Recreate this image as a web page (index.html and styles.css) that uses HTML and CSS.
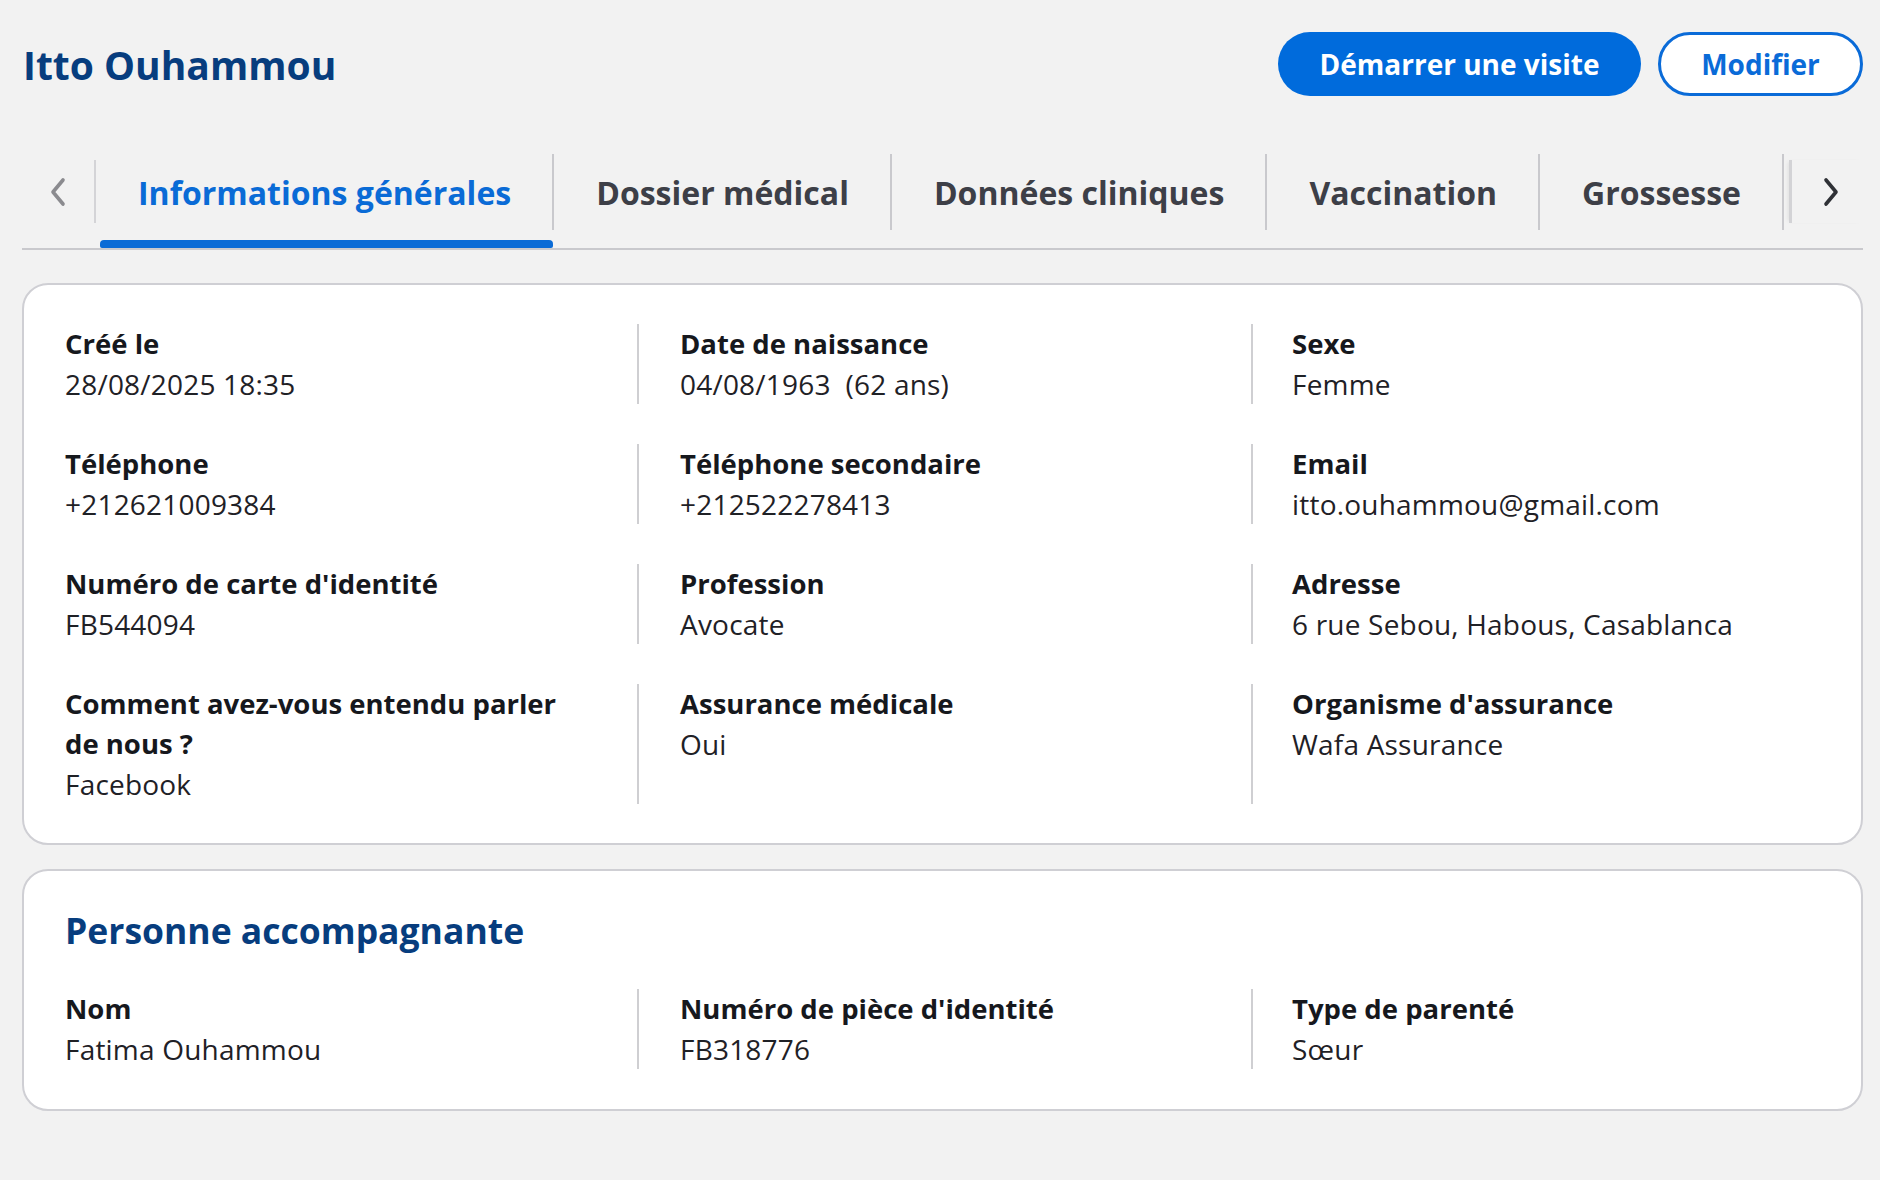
FILE: index.html
```html
<!DOCTYPE html>
<html lang="fr">
<head>
<meta charset="utf-8">
<title>Itto Ouhammou</title>
<link rel="stylesheet" href="styles.css">
</head>
<body>
<div class="page">
  <header class="header">
    <h1 class="name">Itto Ouhammou</h1>
    <div class="actions">
      <button class="btn btn-primary">Démarrer une visite</button>
      <button class="btn btn-outline">Modifier</button>
    </div>
  </header>

  <nav class="tabs">
    <button class="chev chev-left" aria-label="Précédent">
      <svg width="20" height="30" viewBox="0 0 20 30"><polyline points="15,3 5,15 15,27" fill="none" stroke="#8b8b8f" stroke-width="3.6" stroke-linecap="round" stroke-linejoin="round"/></svg>
    </button>
    <div class="tab-list">
      <div class="tab active"><span class="tab-label">Informations générales</span><span class="tab-bar"></span></div>
      <div class="tab"><span class="tab-label">Dossier médical</span><span class="tab-bar"></span></div>
      <div class="tab"><span class="tab-label">Données cliniques</span><span class="tab-bar"></span></div>
      <div class="tab"><span class="tab-label">Vaccination</span><span class="tab-bar"></span></div>
      <div class="tab"><span class="tab-label">Grossesse</span><span class="tab-bar"></span></div>
    </div>
    <button class="chev chev-right" aria-label="Suivant">
      <svg width="20" height="30" viewBox="0 0 20 30"><polyline points="5,3 15,15 5,27" fill="none" stroke="#2f3136" stroke-width="3.6" stroke-linecap="round" stroke-linejoin="round"/></svg>
    </button>
  </nav>

  <section class="card">
    <div class="grid">
      <div class="field"><div class="label">Créé le</div><div class="value">28/08/2025 18:35</div></div>
      <div class="field"><div class="label">Date de naissance</div><div class="value">04/08/1963&nbsp; (62 ans)</div></div>
      <div class="field"><div class="label">Sexe</div><div class="value">Femme</div></div>

      <div class="field"><div class="label">Téléphone</div><div class="value">+212621009384</div></div>
      <div class="field"><div class="label">Téléphone secondaire</div><div class="value">+212522278413</div></div>
      <div class="field"><div class="label">Email</div><div class="value">itto.ouhammou@gmail.com</div></div>

      <div class="field"><div class="label">Numéro de carte d'identité</div><div class="value">FB544094</div></div>
      <div class="field"><div class="label">Profession</div><div class="value">Avocate</div></div>
      <div class="field"><div class="label">Adresse</div><div class="value">6 rue Sebou, Habous, Casablanca</div></div>

      <div class="field"><div class="label">Comment avez-vous entendu parler de nous ?</div><div class="value">Facebook</div></div>
      <div class="field"><div class="label">Assurance médicale</div><div class="value">Oui</div></div>
      <div class="field"><div class="label">Organisme d'assurance</div><div class="value">Wafa Assurance</div></div>
    </div>
  </section>

  <section class="card card-companion">
    <h2 class="card-title">Personne accompagnante</h2>
    <div class="grid">
      <div class="field"><div class="label">Nom</div><div class="value">Fatima Ouhammou</div></div>
      <div class="field"><div class="label">Numéro de pièce d'identité</div><div class="value">FB318776</div></div>
      <div class="field"><div class="label">Type de parenté</div><div class="value">Sœur</div></div>
    </div>
  </section>
</div>
</body>
</html>
```

FILE: styles.css
```css
* { box-sizing: border-box; }

html, body {
  margin: 0;
  background: #f2f2f2;
}

body {
  font-family: "Open Sans", "Noto Sans", sans-serif;
  color: #16181d;
}

.page {
  padding: 32px 17px 40px 22px;
}

/* Header */
.header {
  display: flex;
  align-items: center;
  justify-content: space-between;
  height: 64px;
}

.name {
  margin: 0;
  padding-left: 1px;
  font-size: 39px;
  font-weight: 700;
  color: #073d7e;
  line-height: 1;
}

.actions {
  display: flex;
  gap: 17px;
}

.btn {
  font-family: inherit;
  height: 64px;
  border-radius: 32px;
  font-size: 28px;
  font-weight: 700;
  cursor: pointer;
  display: flex;
  align-items: center;
  justify-content: center;
}

.btn-primary {
  width: 363px;
  background: #006bdc;
  border: none;
  color: #fff;
}

.btn-outline {
  width: 205px;
  background: #fff;
  border: 3px solid #0a6bd8;
  color: #0a6bd8;
}

/* Tabs */
.tabs {
  display: flex;
  align-items: flex-start;
  margin-top: 58px;
  border-bottom: 2px solid #c9c9cd;
}

.chev {
  flex: 0 0 auto;
  width: 74px;
  height: 63px;
  margin-top: 6px;
  background: transparent;
  border: none;
  padding: 0;
  display: flex;
  align-items: center;
  justify-content: center;
}

.chev-left {
  border-right: 2px solid #d4d4d7;
}

.chev-right {
  border-left: 3px solid #d3d3d6;
  box-shadow: -3px 0 4px -2px rgba(0, 0, 0, 0.08);
  padding-left: 6px;
}

.tab-list {
  flex: 1 1 auto;
  display: flex;
  overflow: hidden;
  min-width: 0;
}

.tab {
  flex: 0 0 auto;
  display: flex;
  flex-direction: column;
}

.tab-label {
  height: 76px;
  padding: 0 41px 0 42px;
  border-right: 2px solid #c9c9cd;
  display: flex;
  align-items: center;
  font-size: 32px;
  font-weight: 700;
  color: #3d3f47;
  white-space: nowrap;
}

.tab-bar {
  height: 8px;
  margin: 10px 1px 0 4px;
  border-radius: 4px 4px 2px 2px;
}

.tab.active .tab-label {
  color: #0a6bd6;
}

.tab.active .tab-bar {
  background: #0a6bd6;
}

/* Cards */
.card {
  margin-top: 33px;
  background: #fff;
  border: 2px solid #cfcfd4;
  border-radius: 26px;
  padding: 39px 41px 39px 41px;
}

.card-companion {
  margin-top: 24px;
  padding-top: 35px;
  padding-bottom: 40px;
}

.card-title {
  margin: 0 0 35px;
  font-size: 35.5px;
  line-height: 48px;
  font-weight: 700;
  color: #073d7e;
}

.grid {
  display: grid;
  grid-template-columns: 572px 614px 1fr;
  row-gap: 40px;
}

.field {
  padding-right: 50px;
}

.field:not(:nth-child(3n+1)) {
  border-left: 2px solid #cfcfd2;
  padding-left: 41px;
}

.field:nth-child(3n) {
  padding-left: 39px;
}

.label {
  font-size: 27.5px;
  font-weight: 700;
  line-height: 40px;
  color: #16181d;
}

.value {
  font-size: 28px;
  font-weight: 400;
  line-height: 40px;
  letter-spacing: 0.2px;
  color: #1f2126;
}
```
